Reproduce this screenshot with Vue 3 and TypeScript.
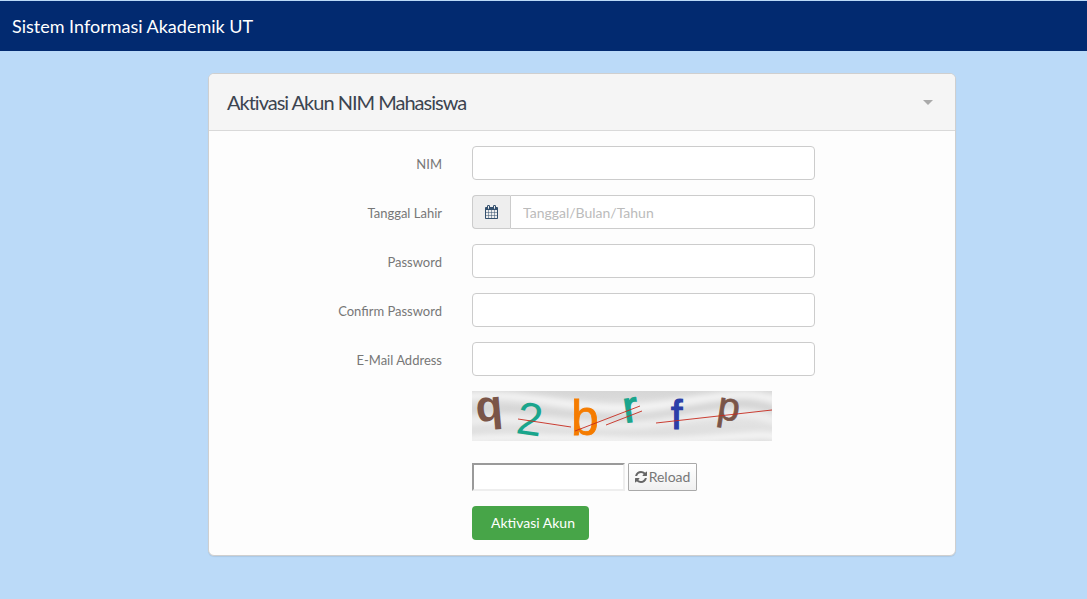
<script setup lang="ts">
const fields = [
  { label: 'NIM', type: 'text' },
  { label: 'Tanggal Lahir', type: 'date' },
  { label: 'Password', type: 'password' },
  { label: 'Confirm Password', type: 'password' },
  { label: 'E-Mail Address', type: 'text' },
]
</script>

<template>
  <div class="page">
    <header class="topbar">Sistem Informasi Akademik UT</header>
    <main class="card">
      <div class="card-head">
        <h1>Aktivasi Akun NIM Mahasiswa</h1>
        <span class="caret"></span>
      </div>
      <form class="card-body" @submit.prevent>
        <div v-for="f in fields" :key="f.label" class="row">
          <label>{{ f.label }}</label>
          <div v-if="f.type === 'date'" class="group">
            <span class="addon">
              <svg class="cal" viewBox="0 0 1664 1792"><path fill="#34506e" d="M128 1664h288v-288h-288v288zm352 0h320v-288h-320v288zm-352-352h288v-320h-288v320zm352 0h320v-320h-320v320zm-352-384h288v-288h-288v288zm736 736h320v-288h-320v288zm-384-736h320v-288h-320v288zm768 736h288v-288h-288v288zm-384-352h320v-320h-320v320zm-352-864v-288q0-13-9.5-22.5t-22.5-9.5h-64q-13 0-22.5 9.5t-9.5 22.5v288q0 13 9.5 22.5t22.5 9.5h64q13 0 22.5-9.5t9.5-22.5zm736 864h288v-320h-288v320zm-384-384h320v-288h-320v288zm384 0h288v-288h-288v288zm32-480v-288q0-13-9.5-22.5t-22.5-9.5h-64q-13 0-22.5 9.5t-9.5 22.5v288q0 13 9.5 22.5t22.5 9.5h64q13 0 22.5-9.5t9.5-22.5zm384-64v1280q0 52-38 90t-90 38h-1408q-52 0-90-38t-38-90v-1280q0-52 38-90t90-38h128v-96q0-66 47-113t113-47h64q66 0 113 47t47 113v96h384v-96q0-66 47-113t113-47h64q66 0 113 47t47 113v96h128q52 0 90 38t38 90z"/></svg>
            </span>
            <input class="control joined" type="text" placeholder="Tanggal/Bulan/Tahun" />
          </div>
          <input v-else class="control" :type="f.type" />
        </div>

        <div class="captcha-row">
          <svg class="captcha" viewBox="0 0 300 50" width="300" height="50">
            <defs>
              <linearGradient id="bg" x1="0" y1="0" x2="0" y2="1">
                <stop offset="0" stop-color="#d6d6d6" />
                <stop offset="0.5" stop-color="#e4e4e4" />
                <stop offset="1" stop-color="#dcdcdc" />
              </linearGradient>
              <filter id="soft" x="-5%" y="-20%" width="110%" height="140%"><feGaussianBlur stdDeviation="3" /></filter>
              <clipPath id="frame"><rect width="300" height="50" /></clipPath>
            </defs>
            <g clip-path="url(#frame)">
              <rect width="300" height="50" fill="url(#bg)" />
              <g filter="url(#soft)" fill="none" stroke-linecap="round">
                <path d="M-10 6 C60 -2 110 26 190 14 S270 0 310 10" stroke="#fbfbfb" stroke-width="6" />
                <path d="M-10 32 C50 20 120 44 200 30 S280 24 310 32" stroke="#f4f4f4" stroke-width="5" />
                <path d="M-10 49 C70 42 150 54 230 48 S290 44 310 47" stroke="#ffffff" stroke-width="5" />
                <path d="M-10 20 C60 10 120 36 200 22 S280 10 310 22" stroke="#c8c8c8" stroke-width="3" />
              </g>
            </g>
            <g class="glyphs">
              <text x="4" y="30" font-size="44" font-weight="700" fill="#7a5548" transform="rotate(-5 16 22)">q</text>
              <text x="45" y="44" font-size="46" fill="#1aa58c" transform="rotate(8 58 28)">2</text>
              <text x="99" y="44" font-size="50" fill="#f57c00" stroke="#f57c00" stroke-width="0.8">b</text>
              <text x="151" y="31" font-size="44" fill="#1aa58c" stroke="#1aa58c" stroke-width="1.4" transform="rotate(-8 158 18)">r</text>
              <text x="199" y="38" font-size="41" fill="#2b3fa8" stroke="#2b3fa8" stroke-width="1.2">f</text>
              <text x="245" y="29" font-size="40" fill="#7a5548" stroke="#7a5548" stroke-width="0.7" transform="rotate(9 256 22)">p</text>
            </g>
            <g stroke="#c62a1e" stroke-width="0.9">
              <line x1="46" y1="28" x2="99" y2="36" />
              <line x1="103" y1="40" x2="168" y2="15" />
              <line x1="134" y1="34" x2="170" y2="20" />
              <line x1="184" y1="32" x2="300" y2="19" />
            </g>
          </svg>
        </div>

        <div class="verify-row">
          <input class="verify" type="text" />
          <button class="reload" type="button">
            <svg class="sync" viewBox="0 0 1536 1536"><path fill="#666" d="M1511 928q0 5-1 7-64 268-268 434.5t-478 166.5q-146 0-282.5-55t-243.5-157l-129 129q-19 19-45 19t-45-19-19-45v-448q0-26 19-45t45-19h448q26 0 45 19t19 45-19 45l-137 137q71 66 161 102t187 36q134 0 250-65t186-179q11-17 53-117 8-23 30-23h192q13 0 22.5 9.5t9.5 22.5zm25-800v448q0 26-19 45t-45 19h-448q-26 0-45-19t-19-45 19-45l138-138q-148-137-349-137-134 0-250 65t-186 179q-11 17-53 117-8 23-30 23h-199q-13 0-22.5-9.5t-9.5-22.5v-7q65-268 270-434.5t480-166.5q146 0 284 55.5t245 156.5l130-129q19-19 45-19t45 19 19 45z"/></svg>
            <span>Reload</span>
          </button>
        </div>

        <div class="submit-row">
          <button class="submit" type="submit">Aktivasi Akun</button>
        </div>
      </form>
    </main>
  </div>
</template>

<style>
html, body { margin: 0; background: #bbdaf8; }
</style>

<style scoped>
.page {
  height: 599px;
  background: #bbdaf8;
  font-family: Lato, "Liberation Sans", sans-serif;
  font-size: 14px;
  color: #777;
  overflow: hidden;
  display: flex;
  flex-direction: column;
}
.topbar {
  margin-top: 1px;
  height: 50px;
  line-height: 50px;
  padding-left: 12px;
  background: #022a70;
  color: #fff;
  font-size: 18px;
}
.card {
  width: 748px;
  box-sizing: border-box;
  margin: 22px 0 0 208px;
  background: #fdfdfd;
  border: 1px solid #cfcfcf;
  border-radius: 6px;
  box-shadow: 0 1px 1px rgba(0, 0, 0, 0.08);
}
.card-head {
  height: 57px;
  box-sizing: border-box;
  background: #f5f5f5;
  border-bottom: 1px solid #d9d9d9;
  border-radius: 5px 5px 0 0;
  padding: 0 22px 0 18px;
  display: flex;
  align-items: center;
  justify-content: space-between;
}
h1 {
  margin: 0;
  font-size: 20px;
  font-weight: 400;
  color: #3c4450;
  letter-spacing: -1px;
}
.caret {
  width: 0;
  height: 0;
  border-left: 5px solid transparent;
  border-right: 5px solid transparent;
  border-top: 5px solid #aaa;
}
.card-body {
  padding: 15px 0 15px;
}
.row {
  display: flex;
  align-items: center;
  height: 34px;
  margin-bottom: 15px;
}
label {
  width: 233px;
  text-align: right;
  margin-right: 30px;
  padding-top: 2px;
  color: #777;
  font-size: 13px;
}
.control {
  width: 343px;
  height: 34px;
  box-sizing: border-box;
  border: 1px solid #ccc;
  border-radius: 4px;
  background: #fff;
  padding: 0 12px;
  font: inherit;
  outline: none;
}
.control::placeholder { color: #bbb; opacity: 1; }
.group {
  display: flex;
  width: 343px;
}
.addon {
  width: 38px;
  height: 34px;
  box-sizing: border-box;
  flex: none;
  background: #eee;
  border: 1px solid #ccc;
  border-right: 0;
  border-radius: 4px 0 0 4px;
  display: flex;
  align-items: center;
  justify-content: center;
}
.cal { width: 13px; height: 14px; }
.joined {
  flex: 1;
  width: auto;
  min-width: 0;
  border-radius: 0 4px 4px 0;
}
.captcha-row, .verify-row, .submit-row {
  padding-left: 263px;
}
.captcha-row { height: 50px; }
.captcha { display: block; overflow: visible; }
.glyphs text { font-family: "Liberation Sans", sans-serif; }
.verify-row {
  display: flex;
  margin-top: 22px;
  height: 28px;
}
.verify {
  width: 153px;
  height: 28px;
  box-sizing: border-box;
  border-style: solid;
  border-width: 2px;
  border-color: #9a9a9a #eee #eee #9a9a9a;
  background: #fff;
  outline: none;
  padding: 0 2px;
  font: inherit;
}
.reload {
  margin-left: 3px;
  width: 69px;
  height: 28px;
  box-sizing: border-box;
  border: 1px solid #a9a9a9;
  border-radius: 1px;
  background: linear-gradient(#fff, #f0f0f0);
  color: #777;
  font: inherit;
  padding: 0 0 2px;
  display: flex;
  align-items: center;
  justify-content: center;
  gap: 2px;
}
.sync { width: 12px; height: 12px; margin-top: 2px; }
.submit-row { margin-top: 15px; }
.submit {
  width: 117px;
  height: 34px;
  border: 0;
  border-radius: 4px;
  background: #47a548;
  color: #fff;
  font: inherit;
  padding: 0 0 2px 5px;
  display: block;
}
</style>
